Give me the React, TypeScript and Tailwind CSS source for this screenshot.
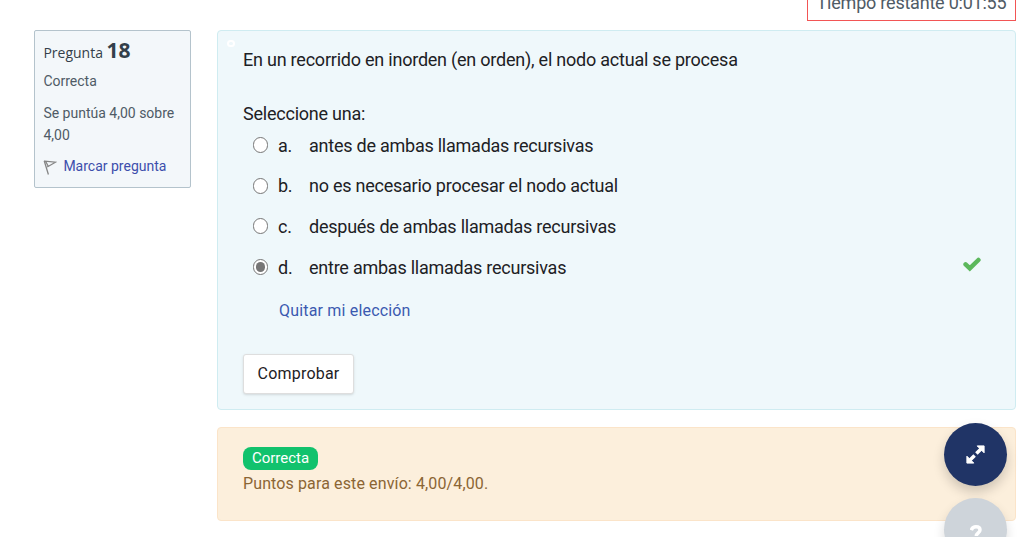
type Answer = { letter: string; text: string; height: string; radio: string; checked?: boolean };

const answers: Answer[] = [
  { letter: "a.", text: "antes de ambas llamadas recursivas", height: "h-10", radio: "mt-[5px]" },
  { letter: "b.", text: "no es necesario procesar el nodo actual", height: "h-[41px]", radio: "mt-[6px]" },
  { letter: "c.", text: "después de ambas llamadas recursivas", height: "h-[41px]", radio: "mt-[5px]" },
  { letter: "d.", text: "entre ambas llamadas recursivas", height: "h-[41px]", radio: "mt-[5px]", checked: true },
];

function Radio({ checked, offset }: { checked?: boolean; offset: string }) {
  return (
    <span className={`flex size-[15.5px] shrink-0 items-center justify-center rounded-full border border-[#767676] bg-white ${offset}`}>
      {checked && <span className="size-[9.5px] rounded-full bg-[#767676]" />}
    </span>
  );
}

function QuestionInfo() {
  return (
    <aside className="h-[158px] w-[157px] shrink-0 rounded-[2px] border border-[#b4c3cc] bg-[#f3f7fa] px-[8.4px] pt-[6px] text-sm text-[#4f5b66]">
      <h3 className="h-[33px] whitespace-nowrap font-['Open_Sans',sans-serif] leading-[27px] text-[#343f4a]">
        Pregunta <span className="text-[21px] font-bold">18</span>
      </h3>
      <div className="h-8 leading-[22px]">Correcta</div>
      <div className="leading-[22px]">Se puntúa 4,00 sobre 4,00</div>
      <a className="mt-[9px] flex items-center whitespace-nowrap leading-[22px] text-[#3d4eac]">
        <svg className="mr-[6px] mt-[2px] h-[15px] w-[14px] shrink-0" viewBox="0 0 14 15" fill="none" stroke="#858585" strokeWidth="1.3">
          <path d="M1.2.8 5.4 14.5M1.6 1.2 12.5 2.2 4.2 7M3 2 5.2 6.3" />
        </svg>
        Marcar pregunta
      </a>
    </aside>
  );
}

export default function App() {
  return (
    <main className="relative h-[537px] w-[1030px] overflow-hidden bg-white font-['Roboto',sans-serif] text-[#1d2125]">
      <header className="flex h-[30px] items-start justify-end pr-[14px]">
        <div className="flex h-[21px] w-[209px] items-end justify-center whitespace-nowrap border border-t-0 border-[#f25555] pb-[7px] text-lg leading-[21px] tracking-[-0.22px] text-[#4f5b66]">
          Tiempo restante 0:01:55
        </div>
      </header>
      <div className="flex items-start pl-[34px]">
        <QuestionInfo />
        <div className="ml-[26px] w-[799px]">
          <section className="relative h-[380px] rounded border border-[#cfecf1] bg-[#eff8fb] pl-[25px] pt-[15px]">
            <span className="absolute left-[9px] top-[9px] h-[7px] w-2 rounded-full border-2 border-white" />
            <p className="text-lg leading-[27px] tracking-[-0.225px]">En un recorrido en inorden (en orden), el nodo actual se procesa</p>
            <div className="mt-[27px] text-lg leading-[27px] tracking-[-0.225px]">Seleccione una:</div>
            <div className="mt-[5px] pl-[9.5px]">
              {answers.map((answer) => (
                <div key={answer.letter} className={`flex items-start text-lg leading-[27px] tracking-[-0.24px] ${answer.height}`}>
                  <Radio checked={answer.checked} offset={answer.radio} />
                  <span className="ml-[10px] w-[31px] shrink-0">{answer.letter}</span>
                  <span>{answer.text}</span>
                  {answer.checked && (
                    <svg className="ml-auto mr-[34.5px] mt-[3px] h-[15px] w-[18px]" viewBox="0 0 18 15" fill="none" stroke="#5cb85c" strokeWidth="4.5" strokeLinecap="round">
                      <path d="m2.6 7.4 4.2 4L15.4 3" />
                    </svg>
                  )}
                </div>
              ))}
            </div>
            <a className="ml-[36px] mt-[4px] block leading-6 tracking-[0.18px] text-[#3b5ab0]">Quitar mi elección</a>
            <button className="mt-[31px] block h-10 w-[111px] rounded-[3px] border border-[#dedede] bg-white leading-6 tracking-[0.2px] shadow-sm">
              Comprobar
            </button>
          </section>
          <section className="mt-[17px] h-[94px] rounded border border-[#fbe4c9] bg-[#fcefdc] pl-[25px] pt-[19px] text-[#8b6534]">
            <div className="flex h-[23px] w-[75px] items-center justify-center rounded-lg bg-[#11c26d] text-[15px] text-white">
              Correcta
            </div>
            <div className="mt-[2px] leading-6 tracking-[0.12px]">Puntos para este envío: 4,00/4,00.</div>
          </section>
        </div>
      </div>
      <button className="absolute left-[944px] top-[423px] flex size-[63px] items-center justify-center rounded-full bg-[#203466] shadow-[0_6px_12px_rgba(0,0,0,0.18)]">
        <svg className="-mt-px size-[19px]" viewBox="0 0 19 19" fill="white" stroke="white" strokeLinejoin="round">
          <path d="M11.2.9h6.9v6.9zM7.8 18.1H.9v-6.9z" strokeWidth="1" />
          <path d="m10.4 8.6 4.8-4.8M8.6 10.4l-4.8 4.8" strokeWidth="3.5" />
        </svg>
      </button>
      <button className="absolute left-[944px] top-[498px] flex size-[63px] items-center justify-center rounded-full bg-[#ced4da] shadow-[0_6px_12px_rgba(0,0,0,0.14)]">
        <svg className="mt-[9px] h-[18px] w-3" viewBox="0 0 12 18" fill="none" stroke="white" strokeWidth="3.5">
          <path d="M1.3 5.2C2 2.8 4 1.8 6 1.8c2.3 0 4 1.2 4 3.1 0 3-3.7 3-3.7 6.2M6.3 13.5V17" />
        </svg>
      </button>
    </main>
  );
}
